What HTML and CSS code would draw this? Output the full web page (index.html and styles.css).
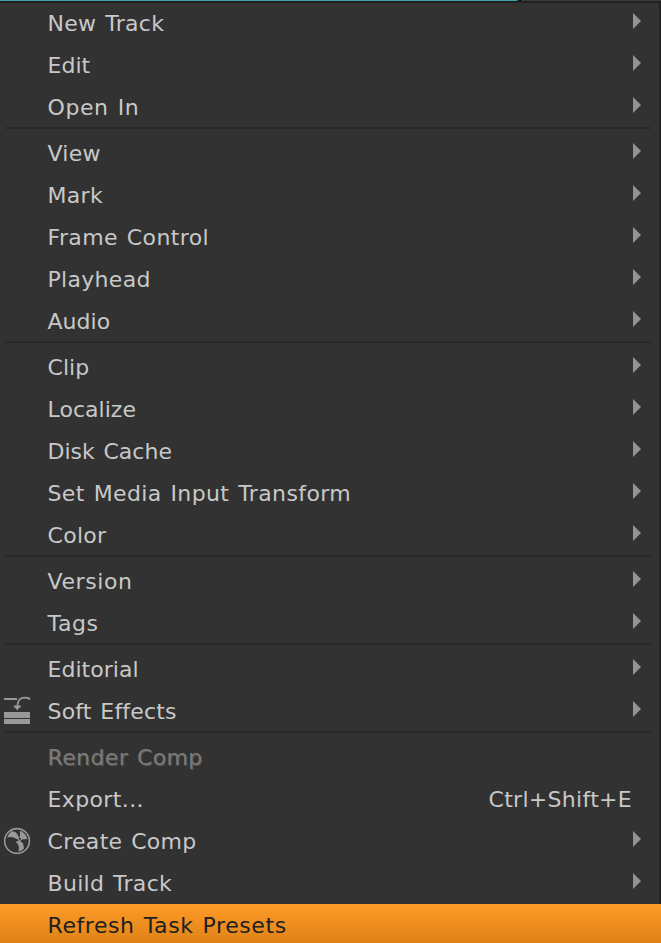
FILE: index.html
```html
<!DOCTYPE html>
<html lang="en">
<head>
<meta charset="utf-8">
<title>Timeline menu</title>
<link rel="stylesheet" href="styles.css">
</head>
<body>
<div class="backdrop"><span class="clip"></span><span class="notch"></span></div>
<nav class="menu">
  <div class="group">
    <div class="item sub"><span class="label">New Track</span></div>
    <div class="item sub"><span class="label tight">Edit</span></div>
    <div class="item sub"><span class="label wide">Open In</span></div>
  </div>
  <div class="group">
    <div class="item sub"><span class="label">View</span></div>
    <div class="item sub"><span class="label">Mark</span></div>
    <div class="item sub"><span class="label medium">Frame Control</span></div>
    <div class="item sub"><span class="label">Playhead</span></div>
    <div class="item sub"><span class="label tight">Audio</span></div>
  </div>
  <div class="group">
    <div class="item sub"><span class="label tight">Clip</span></div>
    <div class="item sub"><span class="label tight">Localize</span></div>
    <div class="item sub"><span class="label tight">Disk Cache</span></div>
    <div class="item sub"><span class="label medium">Set Media Input Transform</span></div>
    <div class="item sub"><span class="label">Color</span></div>
  </div>
  <div class="group">
    <div class="item sub"><span class="label wide">Version</span></div>
    <div class="item sub"><span class="label wide">Tags</span></div>
  </div>
  <div class="group">
    <div class="item sub"><span class="label tight">Editorial</span></div>
    <div class="item sub">
      <svg class="icon" viewBox="0 0 28 28">
        <path d="M0 3h13" stroke="#999" stroke-width="2"/>
        <path d="M26 3.500C24.500 1 18 0.800 15.500 3.500C13.800 5.500 13.300 8 13.200 13M9.800 10.500h7" fill="none" stroke="#999" stroke-width="1.800"/>
        <path d="M10.500 10.500h5.500l-2.800 4z" fill="#999"/>
        <path d="M0 16h26v6H0zM0 23h26v5H0z" fill="#999"/>
      </svg>
      <span class="label soft">Soft Effects</span>
    </div>
  </div>
  <div class="group">
    <div class="item disabled"><span class="label medium">Render Comp</span></div>
    <div class="item"><span class="label medium">Export...</span><span class="shortcut">Ctrl+Shift+E</span></div>
    <div class="item sub">
      <svg class="icon" viewBox="0 0 28 28">
        <circle cx="13" cy="15" r="12.400" fill="none" stroke="#999" stroke-width="1.6"/>
        <path d="M3.200 11.500Q4.500 7.500 8 5L12 6.500L14.500 10L13.500 13.500Q8 10 3.200 11.500z" fill="#999"/>
        <path d="M16 11V4.500Q22 7 23.300 13L17.500 13.500z" fill="#999"/>
        <path d="M11.500 16L15 14.500L19 17L20 22.500Q17 25.500 14.500 25.500Q16 18.500 11.500 16z" fill="#999"/>
        <circle cx="15.800" cy="12.800" r="1.700" fill="#323232" stroke="#aaa"/>
      </svg>
      <span class="label">Create Comp</span>
    </div>
    <div class="item sub"><span class="label">Build Track</span></div>
    <div class="item active"><span class="label wide">Refresh Task Presets</span></div>
  </div>
</nav>
</body>
</html>
```
FILE: styles.css
```css
html, body {
  margin: 0;
  height: 943px;
  overflow: hidden;
  background: #323232;
}
body {
  font: 22px/42px Verdana, "DejaVu Sans", sans-serif;
  letter-spacing: 0.3px;
  word-spacing: 1.5px;
  color: #c8c8c8;
}
.backdrop {
  display: flex;
  height: 1px;
  background: #3a3a3a;
}
.clip {
  width: 517px;
  background: #3ba4a7;
}
.notch {
  width: 2px;
  margin-left: 2px;
  background: #000;
}
.menu {
  box-sizing: border-box;
  height: 942px;
  border-top: 2px solid #212121;
  border-right: 2px solid #212121;
}
.group:first-child {
  margin-top: -1px;
}
.group + .group::before {
  content: "";
  display: block;
  height: 2px;
  margin: -1px 8px 3px 5px;
  background: #282828;
}
.item {
  position: relative;
  display: flex;
  align-items: center;
  box-sizing: border-box;
  height: 42px;
  padding: 0 27px 0 47.5px;
  white-space: pre;
}
.label {
  flex: 1;
}
.label, .shortcut {
  padding-top: 2px;
}
.tight {
  letter-spacing: 0.03px;
}
.soft {
  letter-spacing: 0.18px;
}
.medium {
  letter-spacing: 0.38px;
}
.wide {
  letter-spacing: 0.58px;
}
.sub::after {
  content: "";
  width: 8px;
  height: 16px;
  margin: 0 -9px 4px 0;
  background: #939393;
  clip-path: polygon(0 0, 100% 50%, 0 100%);
}
.icon {
  position: absolute;
  left: 4px;
  top: 6px;
  width: 28px;
  height: 28px;
}
.disabled {
  color: #7b7b7b;
  text-shadow: 1px 1px 0 #55524e;
}
.active {
  margin-right: -2px;
  color: #202020;
  background: linear-gradient(#ff9b27, #df8318 38px);
}
```
